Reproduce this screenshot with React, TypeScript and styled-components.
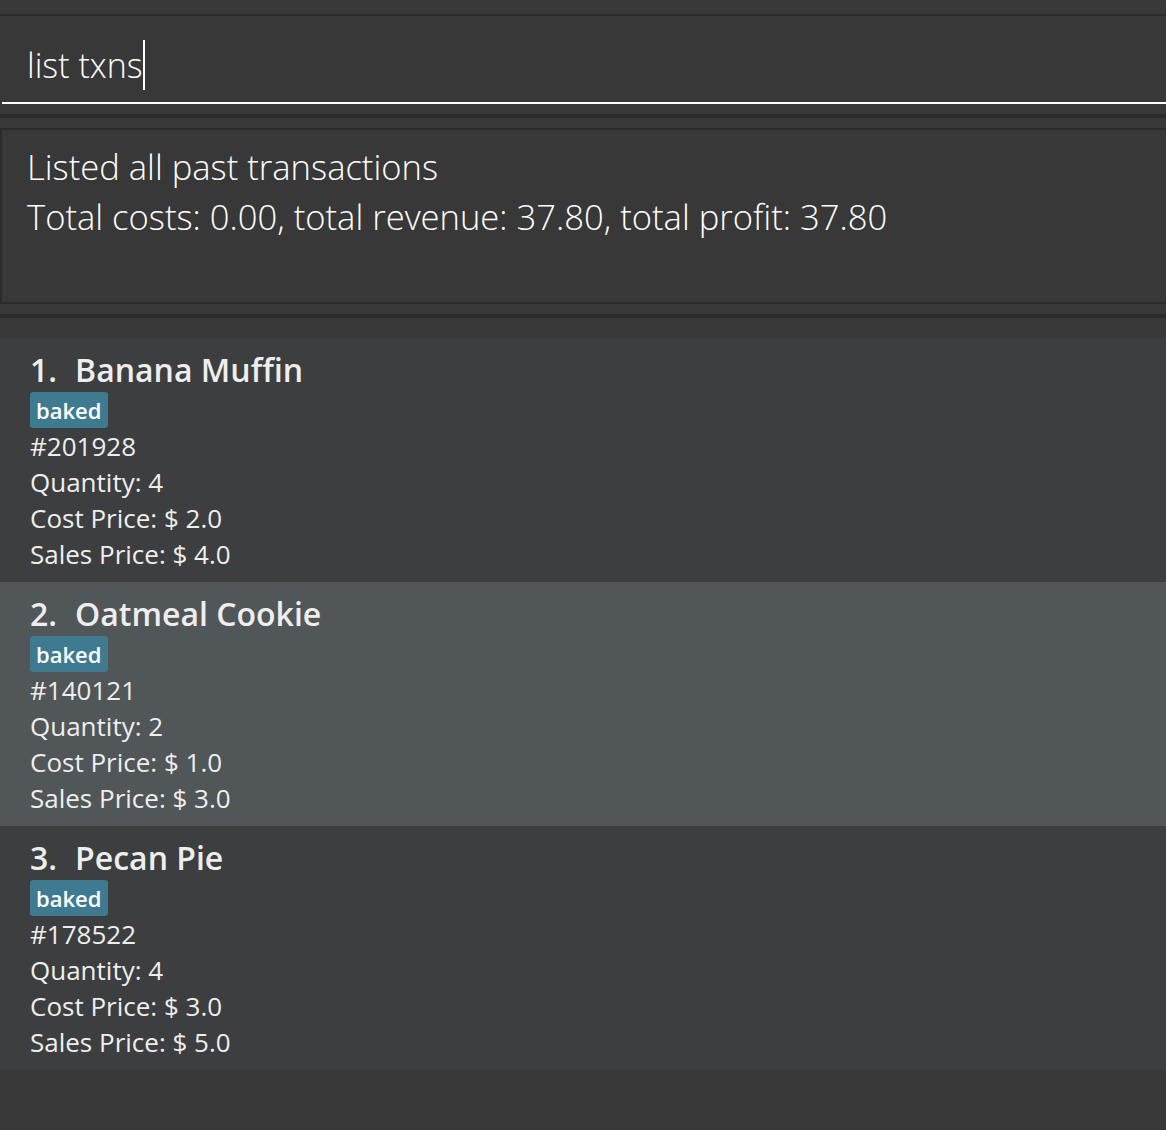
import React from "react";
import styled, { createGlobalStyle } from "styled-components";

const Global = createGlobalStyle`
  html, body { margin: 0; padding: 0; background: #383838; }
  body { font-family: "Open Sans", "Liberation Sans", sans-serif; }
`;

const Page = styled.div`
  width: 1166px;
  height: 1130px;
  overflow: hidden;
  background: #383838;
  display: flex;
  flex-direction: column;
`;

const TopStrip = styled.div`
  height: 14px;
`;

const Divider = styled.div<{ $h: number }>`
  height: ${(p) => p.$h}px;
  background: #2b2b2b;
  flex-shrink: 0;
`;

const CommandBox = styled.div`
  height: 98px;
  display: flex;
  flex-direction: column;
  padding-left: 2px;
  box-sizing: border-box;
`;

const CommandField = styled.div`
  height: 88px;
  border-bottom: 2px solid #ffffff;
  display: flex;
  align-items: center;
  padding: 12px 0 0 25px;
  box-sizing: border-box;
`;

const CommandText = styled.span`
  color: #ffffff;
  font-size: 34px;
  font-weight: 300;
  line-height: 50px;
`;

const Caret = styled.span`
  display: inline-block;
  width: 2px;
  height: 50px;
  background: #ffffff;
  vertical-align: top;
`;

const ResultArea = styled.div`
  height: 196px;
  padding-top: 10px;
  padding-bottom: 10px;
  box-sizing: border-box;
`;

const ResultBox = styled.div`
  height: 100%;
  width: 1180px;
  border: 2px solid #2b2b2b;
  box-sizing: border-box;
  padding: 12px 0 0 25px;
  color: #ffffff;
  font-size: 34.6px;
  font-weight: 300;
  line-height: 50px;
`;

const List = styled.div`
  flex: 1;
  padding-top: 20px;
  display: flex;
  flex-direction: column;
`;

const Cell = styled.div<{ $odd: boolean }>`
  height: 244px;
  box-sizing: border-box;
  background: ${(p) => (p.$odd ? "#515658" : "#3c3e3f")};
  padding: 12px 0 0 30px;
  color: #eeeeee;
  display: flex;
  flex-direction: column;
  align-items: flex-start;
`;

const Title = styled.div`
  font-size: 32px;
  font-weight: 600;
  line-height: 40px;
  color: #eeeeee;
  display: flex;
  gap: 18px;
`;

const Tag = styled.span`
  background: #3e7b91;
  color: #ffffff;
  border-radius: 3px;
  font-size: 22px;
  font-weight: 600;
  line-height: 36px;
  padding: 0 7px 0 6px;
  margin-top: 2px;
`;

const Line = styled.div`
  font-size: 26px;
  line-height: 36px;
  color: #eeeeee;
`;

const items = [
  { name: "Banana Muffin", id: "#201928", qty: 4, cost: "2.0", sale: "4.0" },
  { name: "Oatmeal Cookie", id: "#140121", qty: 2, cost: "1.0", sale: "3.0" },
  { name: "Pecan Pie", id: "#178522", qty: 4, cost: "3.0", sale: "5.0" },
];

export default function App() {
  return (
    <Page>
      <Global />
      <TopStrip />
      <Divider $h={2} />
      <CommandBox>
        <CommandField>
          <CommandText>
            list txns
            <Caret />
          </CommandText>
        </CommandField>
      </CommandBox>
      <Divider $h={4} />
      <ResultArea>
        <ResultBox>
          Listed all past transactions
          <br />
          Total costs: 0.00, total revenue: 37.80, total profit: 37.80
        </ResultBox>
      </ResultArea>
      <Divider $h={4} />
      <List>
        {items.map((it, i) => (
          <Cell key={it.id} $odd={i % 2 === 1}>
            <Title>
              <span>{i + 1}.</span>
              <span>{it.name}</span>
            </Title>
            <Tag>baked</Tag>
            <Line>{it.id}</Line>
            <Line>Quantity: {it.qty}</Line>
            <Line>Cost Price: $ {it.cost}</Line>
            <Line>Sales Price: $ {it.sale}</Line>
          </Cell>
        ))}
      </List>
    </Page>
  );
}
